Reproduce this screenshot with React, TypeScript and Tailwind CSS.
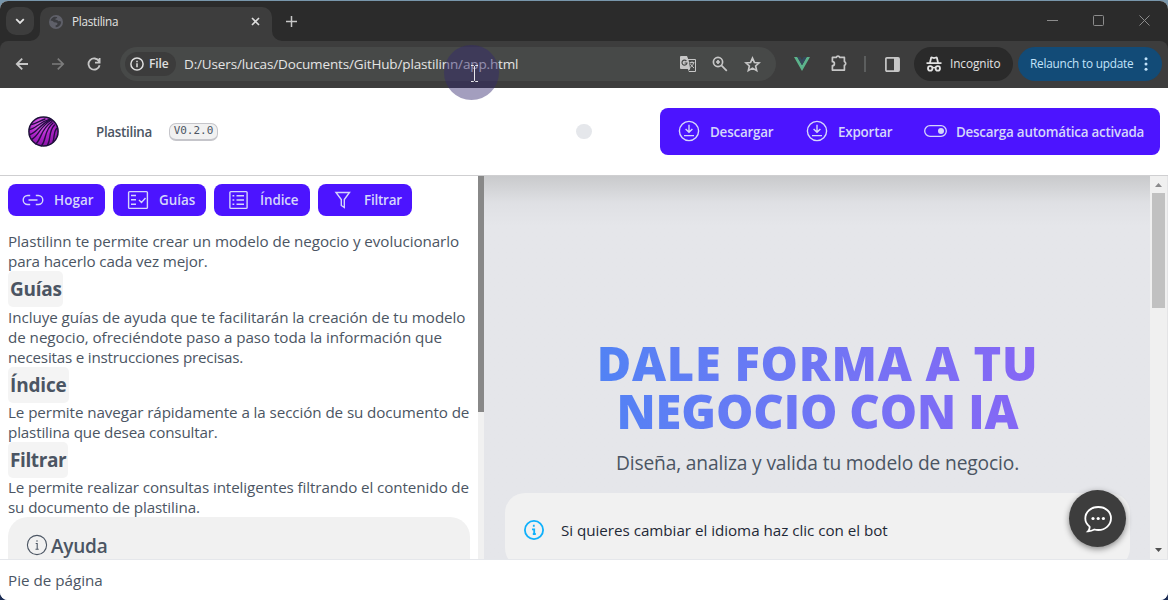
import type { ReactNode } from "react";

function Icon({ c = "", vb = "0 0 24 24", sw = 1.5, children }: { c?: string; vb?: string; sw?: number; children: ReactNode }) {
  return (
    <svg className={"shrink-0 " + c} viewBox={vb} fill="none" stroke="currentColor" strokeWidth={sw}>
      {children}
    </svg>
  );
}

function DownloadIcon() {
  return (
    <Icon c="size-[22px] -mt-[2px]" vb="0 0 22 22" sw={1.4}>
      <circle cx="11" cy="11" r="9.6" />
      <path d="M11 4.8v7.4M7.6 9l3.4 3.3L14.4 9M6 15.6h10" />
    </Icon>
  );
}

function TabStrip() {
  return (
    <div className="flex h-[40px] shrink-0 bg-[#2b2b2b]">
      <div className="flex w-[40px] shrink-0 justify-center pt-[6px]">
        <div className="flex size-[28px] items-center justify-center rounded-[10px] bg-[#3d3d3d] text-[#e3e3e3]">
          <Icon c="size-[10px]" vb="0 0 10 10" sw={1.8}><path d="M1.2 3.2 5 7l3.800-3.800" /></Icon>
        </div>
      </div>
      <div className="relative mt-[6px] flex w-[232px] items-center rounded-t-[10px] bg-[#3d3d3d] pb-[5px] pl-[9px] pr-[12px]">
        <svg className="absolute bottom-0 -left-[10px] size-[10px] text-[#3d3d3d]" viewBox="0 0 10 10"><path fill="currentColor" d="M10 0v10H0A10 10 0 0 0 10 0" /></svg>
        <svg className="absolute -right-[10px] bottom-0 size-[10px] text-[#3d3d3d]" viewBox="0 0 10 10"><path fill="currentColor" d="M0 0v10h10A10 10 0 0 1 0 0" /></svg>
        <svg className="size-[14px] shrink-0" viewBox="0 0 14 14">
          <circle cx="7" cy="7" r="7" fill="#5f6069" />
          <path fill="#3b3c40" d="M1.600 5.600C2 3.800 3.600 2.200 5.600 1.800l2.300.1.300 1-1.600.7-.2 1.200 1.900.2 1 1.300 1.500-.2 1.400.7c0 2.600-1.600 4.600-3.800 5.300l-1.600.1-.3-1.600 1.700-.9.3-1.400-1.300-.9-2.200-.2-1.300-1.200z" />
        </svg>
        <span className="ml-[9px] flex-1 text-[11.7px] leading-none tracking-[-0.25px] text-[#e3e3e3]">Plastilina</span>
        <Icon c="size-[9px] text-[#dcdcdc]" vb="0 0 9 9" sw={1.6}><path d="m1 1 7 7M8 1 1 8" /></Icon>
      </div>
      <div className="flex flex-1 items-center text-[#c8c8c8]">
        <Icon c="ml-[14px] size-[11px]" vb="0 0 11 11" sw={1.5}><path d="M5.500 0v11M0 5.500h11" /></Icon>
      </div>
      <div className="flex items-center gap-[35px] pr-[18px] pb-px text-[#8c8c8c]">
        <Icon c="size-[11px]" vb="0 0 11 11" sw={1}><path d="M0 5.500h11" /></Icon>
        <Icon c="size-[11px]" vb="0 0 11 11" sw={1}><rect x=".5" y=".5" width="10" height="10" rx="1" /></Icon>
        <Icon c="size-[11px]" vb="0 0 11 11" sw={1}><path d="m.5.5 10 10M10.500.5l-10 10" /></Icon>
      </div>
    </div>
  );
}

function Toolbar() {
  return (
    <div className="shrink-0 bg-[#2b2b2b]">
      <div className="flex h-[47px] items-center rounded-t-lg bg-[#3d3d3d] pb-px pr-[6px] text-[#c7c7c7]">
        <Icon c="ml-[15px] size-[14px]" vb="0 0 14 14" sw={1.8}><path d="M13 7H2M7.200 1.600 1.800 7l5.400 5.400" /></Icon>
        <Icon c="ml-[22px] size-[14px] text-[#7c7c7c]" vb="0 0 14 14" sw={1.7}><path d="M1 7h11M6.800 1.600 12.200 7l-5.400 5.400" /></Icon>
        <Icon c="ml-[22px] size-[14px]" vb="0 0 14 14" sw={1.8}>
          <path d="M12 4.300A5.600 5.600 0 1 0 12.600 8.200M12.600 1v4.600H8" />
        </Icon>
        <div className="ml-[19px] flex h-[34px] w-[656px] items-center rounded-full bg-[#474948] pl-[5px] pr-[15px]">
          <div className="flex h-[24px] w-[51px] items-center rounded-full bg-[#3c3c3c] pl-[5px] text-[#e0e0e0]">
            <Icon c="size-[14px]" vb="0 0 14 14" sw={1.5}><circle cx="7" cy="7" r="6.1" /><path d="M7 6.300v4M7 3.700v1.500" /></Icon>
            <span className="ml-[5px] text-[12px] leading-none font-semibold tracking-[-0.1px]">File</span>
          </div>
          <span className="ml-[8px] flex-1 pt-[2px] text-[13.500px] leading-none tracking-[-0.14px] whitespace-nowrap text-[#e4e4e4]">D:/Users/lucas/Documents/GitHub/plastilinn/app.html</span>
          <svg className="size-[18px] shrink-0" viewBox="0 0 18 18">
            <path fill="#c7c7c7" d="M2 1h6l1.200 3H16a1 1 0 0 1 1 1v11a1 1 0 0 1-1 1h-6l-1.200-3H2a1 1 0 0 1-1-1V2a1 1 0 0 1 1-1" />
            <path fill="#474948" d="m9.600 5 6.400.1V16h-5l-1.600.1 1.800-2.200z" />
            <path d="M7.400 6A2.500 2.500 0 1 0 8 8H5.600" fill="none" stroke="#474948" strokeWidth="1.2" />
            <path d="M10.600 7.600h4.800M13 6.400v1.200M14.600 7.800c-.4 2-1.800 3.500-3.400 4.600M11.400 8.600c.6 1.800 2 3 3.600 4.400" fill="none" stroke="#c7c7c7" strokeWidth="1" />
          </svg>
          <Icon c="ml-[15px] size-[16px]" vb="0 0 16 16" sw={1.7}>
            <circle cx="6" cy="6" r="4.6" /><path d="m9.400 9.400 5.400 5.400M6 4v4M4 6h4" />
          </Icon>
          <Icon c="ml-[16px] size-[17px]" vb="0 0 24 24" sw={2.3}>
            <path d="m12 3 2.700 6.100 6.700.6-5 4.400 1.500 6.500L12 17.100l-5.900 3.500 1.500-6.500-5-4.400 6.700-.6z" />
          </Icon>
        </div>
        <svg className="ml-[18px] h-[14px] w-[16px] shrink-0" viewBox="0 0 16 14">
          <path fill="#5cb38b" d="M0 0h3.300L8 8.300 12.700 0H16L8 14z" /><path fill="#34485c" d="M3.300 0h3L8 3l1.700-3h3L8 8.300z" />
        </svg>
        <Icon c="ml-[20px] -mt-[2px] size-[18px]" vb="0 0 18 18" sw={1.7}>
          <path d="M2.400 3.400h3.800a1.900 1.900 0 0 1 3.600 0h4.600v4.200a1.900 1.900 0 0 1 0 3.600v4.900H2.400v-4.400a2 2 0 0 0 0-4z" strokeLinejoin="round" />
        </Icon>
        <div className="ml-[16px] h-[16px] w-[2px] bg-[#5c5e5e]" />
        <svg className="ml-[19px] size-[15px] shrink-0" viewBox="0 0 15 15">
          <rect x=".9" y=".9" width="13.2" height="13.2" rx="1" fill="none" stroke="#c7c7c7" strokeWidth="1.7" />
          <path d="M9 1h5v13H9z" fill="#c7c7c7" />
        </svg>
        <div className="ml-[14px] flex h-[34px] w-[99px] items-center rounded-full bg-[#2a2a2a] pl-[12px] text-[#e3e3e3]">
          <svg className="size-[16px] shrink-0" viewBox="0 0 16 16">
            <path fill="none" stroke="currentColor" strokeWidth="1.8" d="M4 6.500 5 2.200q.2-.9 1-.7L8 2l2-.5q.8-.2 1 .7l1 4.300M.5 7.200h15" />
            <circle cx="4.2" cy="12.4" r="2.2" fill="none" stroke="currentColor" strokeWidth="1.8" />
            <circle cx="11.8" cy="12.4" r="2.2" fill="none" stroke="currentColor" strokeWidth="1.8" />
            <path d="M6.300 12q1.700-1 3.400 0" fill="none" stroke="currentColor" strokeWidth="1.3" />
          </svg>
          <span className="ml-[8px] text-[11.8px] leading-none tracking-[-0.08px]">Incognito</span>
        </div>
        <div className="ml-[5px] flex h-[34px] w-[144px] items-center rounded-full bg-[#124b77] pl-[12px] text-[#c2e3fb]">
          <span className="flex-1 text-[11.8px] leading-none tracking-[-0.21px] whitespace-nowrap">Relaunch to update</span>
          <svg className="mr-[14px] h-[14px] w-[4px]" viewBox="0 0 4 14" fill="currentColor">
            <circle cx="2" cy="1.8" r="1.5" /><circle cx="2" cy="7" r="1.5" /><circle cx="2" cy="12.2" r="1.5" />
          </svg>
        </div>
      </div>
    </div>
  );
}

function Logo() {
  return (
    <svg className="size-[31px] shrink-0" viewBox="0 0 31 31">
      <defs>
        <radialGradient id="ball" cx=".42" cy=".25" r=".8">
          <stop offset="0" stopColor="#e070ee" /><stop offset=".5" stopColor="#b224cc" /><stop offset="1" stopColor="#84129f" />
        </radialGradient>
      </defs>
      <circle cx="15.5" cy="15.5" r="14.6" fill="url(#ball)" stroke="#1d1238" strokeWidth="1.5" />
      <g fill="none" stroke="#260e45" strokeWidth="1.4" strokeLinecap="round">
        <path d="M3.500 8.500C8 8 11 5 17 3" />
        <path d="M1.500 13.500C8 13 10 6.500 22 3.200" />
        <path d="M1.800 18.500C9 17 11 8.500 23 3.500" />
        <path d="M3.500 23.500C11 20 11 11 23.500 4" />
        <path d="M8 28C14 22 12 14 24 5.500" />
        <path d="M13.500 29.800C19 23 15.500 15 25 7" />
        <path d="M19.500 29.200C23.500 22 20 16 26.500 9" />
        <path d="M25 26C27 20 25 17 28.500 12.500" />
      </g>
    </svg>
  );
}

function Header() {
  return (
    <header className="flex h-[88px] shrink-0 items-center border-b border-[#cfcfd1] bg-white pl-[28px] pr-[8px]">
      <Logo />
      <span className="ml-[37px] w-[73px] pt-[2px] text-[13.4px] leading-none font-semibold tracking-[-0.3px]">Plastilina</span>
      <span className="flex h-[18px] w-[49px] items-center justify-center rounded-[7px] border border-b-2 border-[#c5c5ca] bg-[#f1f1f1] pb-[2px] font-['DejaVu_Sans_Mono',monospace] text-[11px] leading-none">V0.2.0</span>
      <span className="ml-[358px] h-[15px] w-[16px] rounded-full bg-[#e5e7eb]" />
      <nav className="ml-auto flex h-[47px] w-[500px] items-center rounded-lg bg-[#4c14ff] pl-[18px] text-[13.4px] leading-none font-semibold text-[#d5d6fb]">
        <div className="flex w-[128px] items-center gap-[10px]"><DownloadIcon /><span className="pt-[2px] tracking-[-0.2px]">Descargar</span></div>
        <div className="flex w-[118px] items-center gap-[10px]"><DownloadIcon /><span className="pt-[2px] tracking-[-0.2px]">Exportar</span></div>
        <div className="flex items-center gap-[9px]">
          <Icon c="w-[23px] h-[12px] -mt-[2px]" vb="0 0 23 12" sw={1.3}>
            <rect x=".7" y=".7" width="21.6" height="10.6" rx="5.3" /><circle cx="17" cy="6" r="3" fill="currentColor" stroke="none" />
          </Icon>
          <span className="pt-[2px] tracking-[-0.23px] whitespace-nowrap">Descarga automática activada</span>
        </div>
      </nav>
    </header>
  );
}

function ActionButton({ w, label, track, children }: { w: string; label: string; track: string; children: ReactNode }) {
  return (
    <button className={"flex h-[32px] shrink-0 items-center rounded-lg bg-[#4c14ff] pl-[14px] text-[13.4px] leading-none font-semibold text-[#d5d6fb] " + w}>
      <Icon c="size-[22px] mr-[10px]" vb="0 0 22 22" sw={1.4}>{children}</Icon>
      <span className={"pt-[2px] " + track}>{label}</span>
    </button>
  );
}

function Line({ c, children }: { c: string; children: string }) {
  return <span className={"block h-[20px] whitespace-nowrap " + c}>{children}</span>;
}

function Chip({ h, c, children }: { h: string; c: string; children: string }) {
  return (
    <div className={"flex items-start " + h}>
      <h2 className={"flex h-[36px] items-center rounded-[5px] bg-[#f4f4f4] pl-[2px] text-[19px] leading-none font-bold " + c}>{children}</h2>
    </div>
  );
}

function LeftPane() {
  return (
    <section className="flex w-[484px] shrink-0 bg-white">
      <div className="h-full w-[478px] overflow-hidden pt-[8px] pl-[8px] text-[15.2px] leading-[20px]">
        <div className="mb-[15px] flex gap-2">
          <ActionButton w="w-[97px]" label="Hogar" track="tracking-[0.1px]">
            <path d="M8.200 15.500H5.700a4.500 4.500 0 0 1 0-9h2.500M13.800 6.500h2.500a4.500 4.500 0 0 1 0 9h-2.500M6.500 11h9" />
          </ActionButton>
          <ActionButton w="w-[93px]" label="Guías" track="">
            <rect x="1.6" y="2.600" width="18.8" height="16.8" rx="1" /><path d="M4 6.500h5M4 10.800h5M4 15.200h5M12 11l2.500 2.500L18.500 9" />
          </ActionButton>
          <ActionButton w="w-[96px]" label="Índice" track="tracking-[-0.1px]">
            <rect x="1.9" y="2.600" width="17.200" height="16.8" rx="1" /><path d="M8.500 6.800H16M8.500 11H16M8.500 15.200H16M4.500 6.800H6.300M4.500 11H6.300M4.500 15.200H6.300" />
          </ActionButton>
          <ActionButton w="w-[94px]" label="Filtrar" track="tracking-[-0.2px]">
            <path d="M4 3.500h13.500l-5.200 7v8l-3-2v-6z" />
          </ActionButton>
        </div>
        <Line c="tracking-[-0.065px]">Plastilinn te permite crear un modelo de negocio y evolucionarlo</Line>
        <Line c="tracking-[-0.13px]">para hacerlo cada vez mejor.</Line>
        <Chip h="h-[36px]" c="w-[55px] tracking-[-0.25px]">Guías</Chip>
        <Line c="tracking-[-0.062px]">Incluye guías de ayuda que te facilitarán la creación de tu modelo</Line>
        <Line c="tracking-[-0.05px]">de negocio, ofreciéndote paso a paso toda la información que</Line>
        <Line c="tracking-[-0.2px]">necesitas e instrucciones precisas.</Line>
        <Chip h="h-[35px]" c="w-[61px] tracking-[-0.15px]">Índice</Chip>
        <Line c="tracking-[-0.09px]">Le permite navegar rápidamente a la sección de su documento de</Line>
        <Line c="tracking-[-0.16px]">plastilina que desea consultar.</Line>
        <Chip h="h-[35px]" c="w-[60px] tracking-[-0.4px]">Filtrar</Chip>
        <Line c="tracking-[-0.1px]">Le permite realizar consultas inteligentes filtrando el contenido de</Line>
        <Line c="tracking-[-0.12px]">su documento de plastilina.</Line>
        <div className="flex h-[80px] w-[462px] items-start rounded-[20px] bg-[#f1f1f1] pt-[17px] pl-[18px]">
          <Icon c="size-[22px]" vb="0 0 22 22" sw={1.1}>
            <circle cx="11" cy="11" r="9.6" /><path d="M9.700 9.500h1.500V15M9.500 15.200h3.200M11 6.200v1.500" />
          </Icon>
          <h3 className="ml-[3px] mt-[2px] text-[19px] leading-[20px] font-semibold tracking-[-0.25px]">Ayuda</h3>
        </div>
      </div>
      <div className="h-full w-[6px] bg-[#f1f1f1]"><div className="h-[236px] bg-[#888888]" /></div>
    </section>
  );
}

function RightPane() {
  return (
    <section className="flex flex-1">
      <div className="relative h-full w-[666px] overflow-hidden bg-[#e5e6ea] bg-linear-to-b from-[#c9cacc] via-[#dfe0e4] via-[7%] to-[#e5e6ea] to-[13%] pl-[21px] pt-[163px]">
        <div className="w-[625px] text-center">
          <h1 className="bg-linear-to-r from-[#3f88f4] to-[#8e5ff5] bg-clip-text text-[47px] leading-[48px] font-extrabold text-transparent">
            <span className="block tracking-[0.78px]">DALE FORMA A TU</span>
            <span className="block tracking-[-0.12px]">NEGOCIO CON IA</span>
          </h1>
          <p className="mt-[14px] text-[19.2px] leading-[28px] tracking-[-0.145px]">Diseña, analiza y valida tu modelo de negocio.</p>
        </div>
        <div className="mt-[16px] flex h-[75px] w-[625px] items-center rounded-[20px] bg-[#f1f1f1] pl-[18px] text-[15.2px] text-[#1f2937]">
          <Icon c="size-[22px] -mt-[2px] text-[#0fb0fb]" vb="0 0 22 22" sw={1.8}>
            <circle cx="11" cy="11" r="9.1" /><path d="M9 10.300h2.200v5M9.800 15h3M10.800 5.800v2" />
          </Icon>
          <span className="ml-[16px] tracking-[-0.03px]">Si quieres cambiar el idioma haz clic con el bot</span>
        </div>
        <div className="absolute top-[314px] right-[24px] flex size-[57px] items-center justify-center rounded-full bg-[#3d3d3d] text-white shadow-[0_2px_6px_rgba(0,0,0,0.45)]">
          <Icon c="size-[28px]" vb="0 0 28 28" sw={1.8}>
            <path d="M5.600 21.600C3 19.500 1.300 17 1.300 13.500 1.300 6.800 7 2 14.300 2S27 6.800 27 13.300 21.500 25 14.300 25c-1.500 0-2.800-.2-4-.5-1.700 1-3.700 1.700-6.300 1.800 1.400-1.400 1.800-2.900 1.600-4.700z" />
            <g fill="currentColor" stroke="none"><circle cx="9" cy="13.5" r="1.6" /><circle cx="14.2" cy="13.5" r="1.6" /><circle cx="19.4" cy="13.5" r="1.6" /></g>
          </Icon>
        </div>
      </div>
      <div className="flex w-[18px] flex-col items-center border-r border-[#e4e4e6] bg-[#f0f0f0] pr-px">
        <svg className="mt-[7px] h-[4px] w-[7px]" viewBox="0 0 7 4"><path d="M0 4h7L3.500 0z" fill="#8a8a8c" /></svg>
        <div className="mt-[6px] ml-px h-[115px] w-[13px] bg-[#c1c1c1]" />
        <svg className="mt-auto mb-[7px] h-[4px] w-[7px]" viewBox="0 0 7 4"><path d="M0 0h7L3.500 4z" fill="#505050" /></svg>
      </div>
    </section>
  );
}

export default function App() {
  return (
    <div className="relative h-[600px] w-[1168px] overflow-hidden bg-linear-to-b from-[#7896ab] from-50% to-[#1c2c55] pt-px font-['Open_Sans',sans-serif] text-[#4b5563]">
      <div className="flex h-[599px] flex-col overflow-hidden rounded-lg bg-white">
        <TabStrip />
        <Toolbar />
        <Header />
        <main className="flex h-[383px] shrink-0 overflow-hidden">
          <LeftPane />
          <RightPane />
        </main>
        <footer className="flex flex-1 items-center border-t border-[#e5e7eb] bg-white pl-[8px] pt-px text-[15.2px] leading-none">Pie de página</footer>
      </div>
      <div className="absolute top-[45px] left-[444px] size-[55px] rounded-full bg-[rgba(50,40,110,0.45)]" />
      <svg className="absolute top-[65px] left-[471px] h-[17px] w-[7px]" viewBox="0 0 7 17">
        <path d="M0 .5h2.500l1 1 1-1H7M0 16.500h2.500l1-1 1 1H7M3.500 1.500v14" fill="none" stroke="#e8e8ec" />
      </svg>
    </div>
  );
}
